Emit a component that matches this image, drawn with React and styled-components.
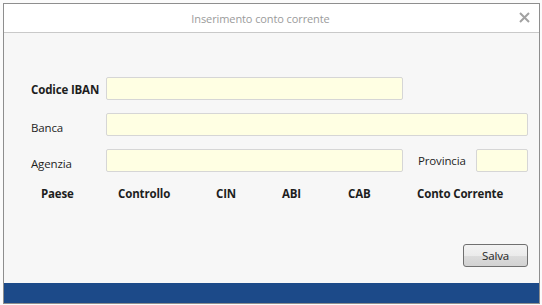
import React from 'react';
import styled, { createGlobalStyle } from 'styled-components';

const GlobalStyle = createGlobalStyle`
  html, body {
    margin: 0;
    padding: 0;
    background: #fbfbfb;
  }
  * {
    box-sizing: border-box;
  }
`;

const Screen = styled.div`
  width: 542px;
  height: 305px;
  padding: 3px 2px 1px 3px;
  font-family: "Open Sans", "Noto Sans", sans-serif;
  font-size: 11.5px;
  letter-spacing: -0.15px;
  color: #1e1e1e;
`;

const Window = styled.div`
  width: 537px;
  height: 301px;
  border: 1px solid #8e8e8e;
  display: flex;
  flex-direction: column;
  background: #f7f7f7;
`;

const TitleBar = styled.div`
  height: 29px;
  flex: none;
  background: #ffffff;
  border-bottom: 1px solid #c9c9c9;
  display: flex;
  align-items: center;
  justify-content: center;
  position: relative;
`;

const Title = styled.span`
  color: #9b9b9b;
  font-size: 11px;
  letter-spacing: -0.1px;
  margin-right: 22px;
`;

const Close = styled.button`
  position: absolute;
  right: 9px;
  top: 8px;
  width: 11px;
  height: 11px;
  padding: 0;
  border: none;
  background: none;
  display: flex;
`;

const Content = styled.div`
  flex: 1;
  padding: 44px 11px 16px 27px;
  display: flex;
  flex-direction: column;
`;

const FieldRow = styled.div`
  display: flex;
  align-items: center;
  height: 23px;
  margin-bottom: 13px;
`;

const Label = styled.label`
  width: 75px;
  flex: none;
  font-weight: ${(p) => (p.$bold ? 700 : 400)};
  white-space: nowrap;
  padding-top: ${(p) => (p.$bold ? '1px' : '5px')};
`;

const Input = styled.input`
  height: 23px;
  width: ${(p) => p.$w}px;
  flex: none;
  border: 1px solid #d6d6d6;
  border-radius: 2px;
  background: #ffffe3;
  padding: 0 4px;
  outline: none;
`;

const SideLabel = styled.label`
  margin-left: 15px;
  width: 58px;
  flex: none;
`;

const HeaderRow = styled.div`
  display: grid;
  grid-template-columns: 77px 98px 66px 66px 69px auto;
  padding-left: 10px;
  margin-top: 1px;
  font-weight: 700;
  line-height: 16px;
`;

const Footer = styled.div`
  margin-top: auto;
  display: flex;
  justify-content: flex-end;
`;

const Button = styled.button`
  width: 65px;
  height: 23px;
  border: 1px solid #707070;
  border-radius: 3px;
  background: linear-gradient(#f3f3f3, #ebebeb 50%, #dcdcdc 51%, #d2d2d2);
  font-family: "Open Sans", "Noto Sans", sans-serif;
  font-size: 11.5px;
  letter-spacing: -0.15px;
  color: #1e1e1e;
  padding: 0;
`;

const StatusBar = styled.div`
  height: 20px;
  flex: none;
  background: #1c4a89;
`;

const headers = ['Paese', 'Controllo', 'CIN', 'ABI', 'CAB', 'Conto Corrente'];

const App = () => (
  <>
    <GlobalStyle />
    <Screen>
      <Window>
        <TitleBar>
          <Title>Inserimento conto corrente</Title>
          <Close aria-label="Chiudi">
            <svg width="11" height="11" viewBox="0 0 11 11">
              <path d="M1 1 L10 10 M10 1 L1 10" stroke="#a2a2a2" strokeWidth="2" />
            </svg>
          </Close>
        </TitleBar>
        <Content>
          <FieldRow>
            <Label $bold>Codice IBAN</Label>
            <Input $w={297} />
          </FieldRow>
          <FieldRow>
            <Label>Banca</Label>
            <Input $w={422} />
          </FieldRow>
          <FieldRow>
            <Label>Agenzia</Label>
            <Input $w={297} />
            <SideLabel>Provincia</SideLabel>
            <Input $w={52} />
          </FieldRow>
          <HeaderRow>
            {headers.map((h) => (
              <span key={h}>{h}</span>
            ))}
          </HeaderRow>
          <Footer>
            <Button>Salva</Button>
          </Footer>
        </Content>
        <StatusBar />
      </Window>
    </Screen>
  </>
);

export default App;
